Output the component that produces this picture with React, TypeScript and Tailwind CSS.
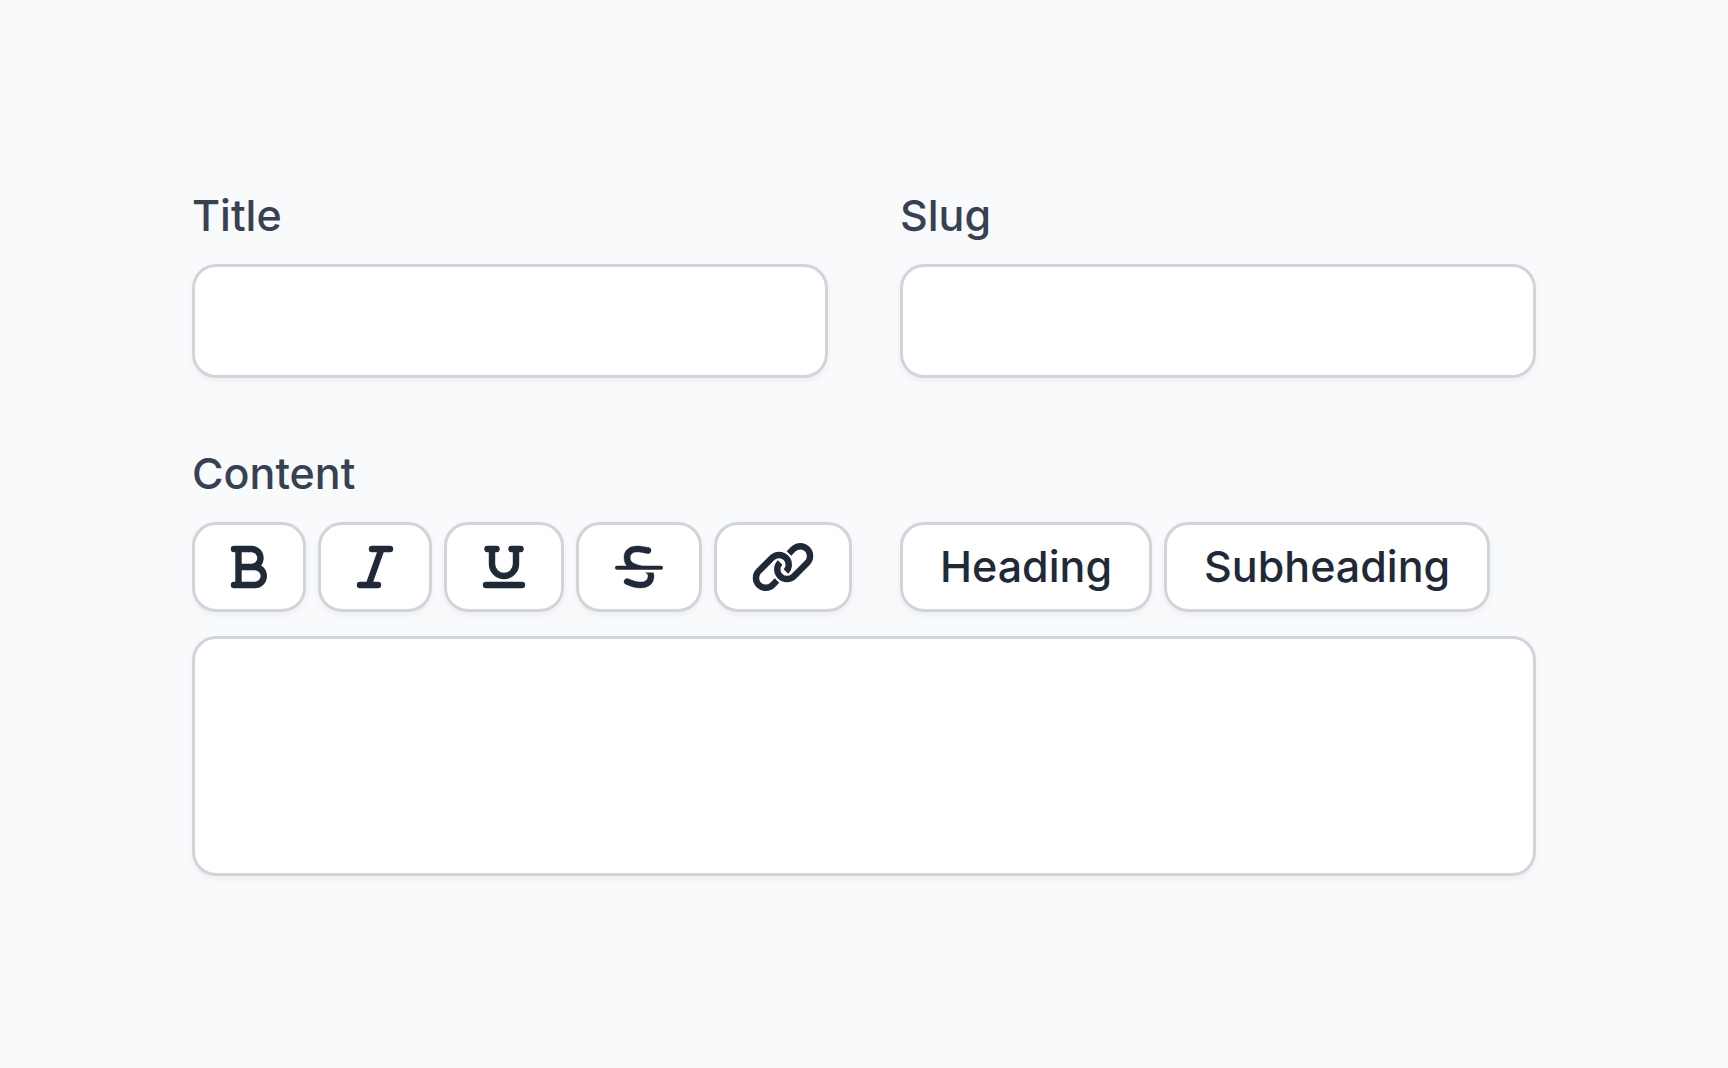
import type { ReactNode } from "react";
import { FaListUl } from "react-icons/fa6";

const fieldClass =
  "w-full rounded-3xl border-3 border-[#d1d5db] bg-white px-9 text-[43px] text-[#1f2937] shadow-[0_3px_6px_rgb(0_0_0/0.05)] outline-none focus:border-gray-500";

const buttonClass =
  "flex h-[90px] shrink-0 items-center justify-center rounded-3xl border-3 border-[#d1d5db] bg-white text-[#1f2937] shadow-[0_3px_6px_rgb(0_0_0/0.05)] hover:bg-gray-50";

function Field({ id, label, children }: { id: string; label: string; children: ReactNode }) {
  return (
    <div className="flex min-w-0 flex-col gap-6">
      <label htmlFor={id} className="pb-0.5 text-[43px] leading-[46px] font-medium text-[#374151]">
        {label}
      </label>
      {children}
    </div>
  );
}

function IconButton({ label, children }: { label: string; children: ReactNode }) {
  return (
    <button type="button" aria-label={label} className={`${buttonClass} px-9`}>
      {children}
    </button>
  );
}

function TextButton({ children }: { children: ReactNode }) {
  return (
    <button type="button" className={`${buttonClass} px-[37px] pb-0.5 text-[43px] leading-[46px] font-medium`}>
      {children}
    </button>
  );
}

function Icon({ className, viewBox, children }: { className: string; viewBox: string; children: ReactNode }) {
  return (
    <svg
      aria-hidden="true"
      className={`overflow-visible ${className}`}
      viewBox={viewBox}
      fill="none"
      stroke="currentColor"
      strokeWidth={6.4}
      strokeLinecap="round"
      strokeLinejoin="round"
    >
      {children}
    </svg>
  );
}

function BoldIcon() {
  return (
    <Icon className="h-[42px] w-9" viewBox="0 0 36 42">
      <path d="M3 3H20.500A9 9 0 0 1 20.500 21H7.500M7.500 3V39M20.500 21H23.800A9 9 0 0 1 23.800 39H3" />
    </Icon>
  );
}

function ItalicIcon() {
  return (
    <Icon className="h-[42px] w-9" viewBox="0 0 36 42">
      <path d="M15 3H33M3 39H21M24.500 3L11.700 39" />
    </Icon>
  );
}

function UnderlineIcon() {
  return (
    <Icon className="size-[42px]" viewBox="0 0 42 42">
      <path d="M4.500 3H13.500M28.500 3H37.500M9 3V18A12 12 0 0 0 33 18V3M3 39H39" />
    </Icon>
  );
}

function StrikethroughIcon() {
  return (
    <Icon className="h-[42px] w-12" viewBox="0 0 48 42">
      <g fill="currentColor" strokeWidth={0.4}>
        <path d="M33.700 1.600C29 0.500 25.500 0 22 0C14 0 9 4.500 9 11.500C9 16 10.500 18.800 13 21H29C25 19.300 20 18.500 17.500 16.500C15.800 15.200 15.200 13.500 15.200 11.500C15.200 8 18 6 22 6C25 6 28.500 6.600 32.300 7.500A3 3 0 0 0 33.700 1.600Z" />
        <path d="M31 26.700H38.300C38.800 27.900 39 29 39 30.200C39 37.500 33.500 42 25.500 42C20.500 42 15.500 40.500 10.800 38.300A3 3 0 0 1 13.300 32.800C17.500 34.700 21.500 36 25.500 36C30 36 33 34 33 30C33 28.500 32.500 27.500 31 26.700Z" />
      </g>
      <path d="M2 21.700H46" strokeWidth={4} />
    </Icon>
  );
}

function LinkIcon() {
  return (
    <Icon className="h-12 w-15" viewBox="0 0 60 48">
      <g strokeLinecap="butt">
        <path d="M24 37.500L19.600 41.900A9.750 9.750 0 0 1 5.800 28.100L19.100 14.800A9.750 9.750 0 0 1 32.900 28.600" />
        <path d="M36 10.500L40.400 6.100A9.750 9.750 0 0 1 54.200 19.900L40.900 33.200A9.750 9.750 0 0 1 27.100 19.400" />
      </g>
    </Icon>
  );
}

export default function App() {
  return (
    <main className="min-h-screen bg-gray-50 p-48 font-['Inter',sans-serif]">
      <form className="flex flex-col gap-[72px]">
        <div className="grid grid-cols-2 gap-[72px]">
          <Field id="title" label="Title">
            <input id="title" type="text" className={`${fieldClass} h-[114px]`} />
          </Field>
          <Field id="slug" label="Slug">
            <input id="slug" type="text" className={`${fieldClass} h-[114px]`} />
          </Field>
        </div>

        <Field id="content" label="Content">
          <div role="toolbar" aria-label="Formatting" className="flex gap-12 overflow-x-clip">
            <div className="flex shrink-0 gap-3">
              <IconButton label="Bold">
                <BoldIcon />
              </IconButton>
              <IconButton label="Italic">
                <ItalicIcon />
              </IconButton>
              <IconButton label="Underline">
                <UnderlineIcon />
              </IconButton>
              <IconButton label="Strikethrough">
                <StrikethroughIcon />
              </IconButton>
              <IconButton label="Link">
                <LinkIcon />
              </IconButton>
            </div>
            <div className="flex shrink-0 gap-3">
              <TextButton>Heading</TextButton>
              <TextButton>Subheading</TextButton>
            </div>
            <div className="flex shrink-0 gap-3">
              <IconButton label="Bulleted list">
                <FaListUl className="size-12" />
              </IconButton>
            </div>
          </div>
          <textarea id="content" className={`${fieldClass} block h-60 resize-none py-6`} />
        </Field>
      </form>
    </main>
  );
}
